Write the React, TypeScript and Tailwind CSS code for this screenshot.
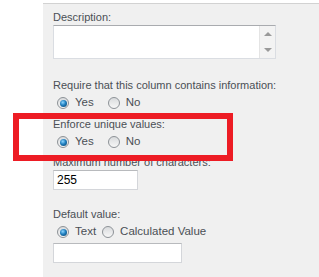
import React from 'react';

const Radio: React.FC<{ checked?: boolean }> = ({ checked }) => (
  <span className="w-[12px] h-[12px] shrink-0 rounded-full border border-[#8d9297] bg-[linear-gradient(180deg,#d9dbdd,#f7f7f7)] flex items-center justify-center">
    {checked && (
      <span className="w-[7px] h-[7px] rounded-full bg-[radial-gradient(circle_at_40%_35%,#8fd6ff,#1f7fbf_45%,#0b3c63)]" />
    )}
  </span>
);

const RadioRow: React.FC<{ items: { label: string; checked?: boolean; gap: string }[] }> = ({ items }) => (
  <div className="flex items-center h-[16px] pl-[4px] text-[11.5px] text-[#4a4f55]">
    {items.map((it) => (
      <label key={it.label} className={`flex items-center gap-[6px] ${it.gap}`}>
        <Radio checked={it.checked} />
        <span>{it.label}</span>
      </label>
    ))}
  </div>
);

const Label: React.FC<{ children: React.ReactNode; className?: string }> = ({ children, className }) => (
  <div className={`text-[11px] leading-[14px] text-[#4a4f55] ${className ?? ''}`}>{children}</div>
);

export default function App() {
  return (
    <div className="relative w-[319px] h-[277px] bg-white flex overflow-hidden font-['Liberation_Sans',Arial,sans-serif]">
      <div className="w-[43px] shrink-0 bg-white" />
      <div className="flex-1 pt-[3px]">
        <div className="h-full border-t border-[#d2d2d2] bg-[#f0f0f0] pl-[10px] pt-[6px]">
          <Label>Description:</Label>
          <div className="mt-[1px] w-[223px] h-[34px] flex bg-white border border-[#dadde2] border-t-[#a9abaf]">
            <div className="flex-1" />
            <div className="w-[16px] border-l border-[#e4e4e4] bg-[#f3f3f3] flex flex-col items-center justify-between py-[6px]">
              <span className="w-0 h-0 border-x-[4px] border-x-transparent border-b-[4px] border-b-[#9a9a9a]" />
              <span className="w-0 h-0 border-x-[4px] border-x-transparent border-t-[4px] border-t-[#9a9a9a]" />
            </div>
          </div>

          <Label className="mt-[19px]">Require that this column contains information:</Label>
          <div className="mt-[3px]">
            <RadioRow items={[{ label: 'Yes', checked: true, gap: 'mr-[14px]' }, { label: 'No', gap: '' }]} />
          </div>

          <Label className="mt-[6px]">Enforce unique values:</Label>
          <div className="mt-[3px]">
            <RadioRow items={[{ label: 'Yes', checked: true, gap: 'mr-[14px]' }, { label: 'No', gap: '' }]} />
          </div>

          <Label className="mt-[5px]">Maximum number of characters:</Label>
          <div className="mt-[1px] w-[85px] h-[20px] bg-white border border-[#d4d6da] border-t-[#b8babd] flex items-center pl-[3px] text-[12px] text-black">
            255
          </div>

          <Label className="mt-[17px]">Default value:</Label>
          <div className="mt-[3px]">
            <RadioRow items={[{ label: 'Text', checked: true, gap: 'mr-[6px]' }, { label: 'Calculated Value', gap: '' }]} />
          </div>
          <div className="mt-[3px] w-[129px] h-[20px] bg-white border border-[#d4d6da] border-t-[#b8babd]" />
        </div>
      </div>

      <div className="absolute left-[13px] top-[113px] w-[220px] h-[48px] border-[6px] border-[#ed1c24]" />
    </div>
  );
}
